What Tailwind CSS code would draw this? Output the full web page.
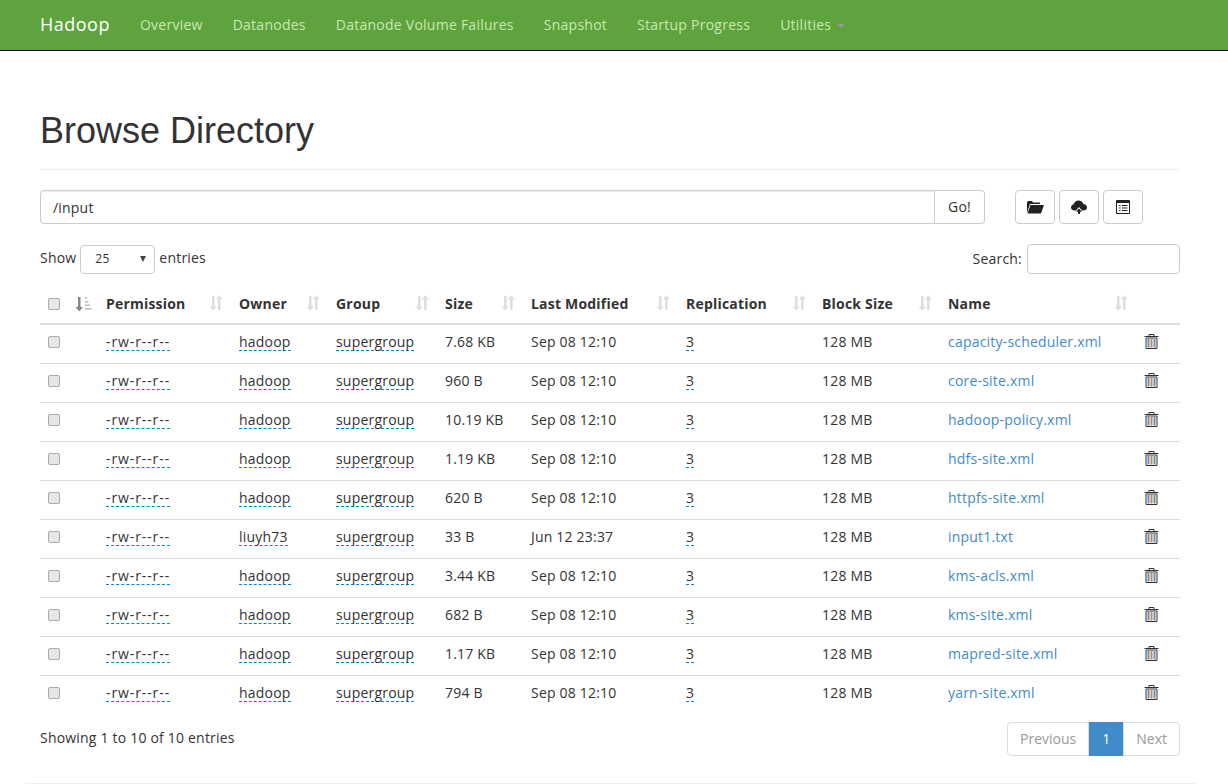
<!DOCTYPE html>
<html lang="en">
<head>
    <meta charset="UTF-8">
    <title>Browsing HDFS</title>
    <script src="https://cdn.jsdelivr.net/npm/@tailwindcss/browser@4"></script>
</head>
<body class="bg-white text-[#333] text-sm tracking-[0.2px] font-['Open_Sans',sans-serif] overflow-hidden h-[784px]">
    <!-- Navbar -->
    <nav class="h-[51px] bg-[#5fa33e] border-b border-black flex items-center pl-10 text-[#c7e9b0]">
        <a class="text-[18px] tracking-[0.5px] text-white mr-[30px]">Hadoop</a>
        <div class="flex items-center gap-[30px] tracking-[0.25px]">
            <a>Overview</a>
            <a>Datanodes</a>
            <a>Datanode Volume Failures</a>
            <a>Snapshot</a>
            <a>Startup Progress</a>
            <a class="flex items-center">Utilities
                <span class="ml-[6px] mt-[2px] border-x-4 border-t-4 border-x-transparent border-t-[#999]"></span>
            </a>
        </div>
    </nav>

    <div class="mx-[25px] w-[1170px] px-[15px]">
        <!-- Title -->
        <div class="mt-[60px] pb-[18px] border-b border-[#eee] h-[59px]">
            <h1 class="text-[36px] leading-[40px] tracking-normal font-['Liberation_Sans',sans-serif]">Browse Directory</h1>
        </div>

        <!-- Path bar -->
        <div class="flex mt-5 w-[1140px]">
            <input value="/input" class="w-[895px] h-[34px] px-3 border border-[#ccc] rounded-l shadow-[inset_0_1px_1px_rgba(0,0,0,0.075)]">
            <button class="w-[50px] h-[34px] border border-l-0 border-[#ccc] rounded-r">Go!</button>
            <div class="flex gap-1 ml-[30px]">
                <button class="w-10 h-[34px] border border-[#ccc] rounded flex items-center justify-center">
                    <svg width="18" height="14" viewBox="0 0 18 14" fill="#222"><path d="M1 13V2.500L2 1h4l1 1.500h7V4H4L1 13z"/><path d="M4.500 5H18l-3 8.500H1.500z"/></svg>
                </button>
                <button class="w-10 h-[34px] border border-[#ccc] rounded flex items-center justify-center">
                    <svg width="16" height="14" viewBox="0 0 16 14" fill="#222"><path d="M3.500 10.500C1.500 10.500 0 9.200 0 7.500 0 6 1 4.800 2.500 4.600 3 2.200 5 .5 7.500.5c2.300 0 4.200 1.500 4.800 3.500C14.400 4 16 5.500 16 7.400c0 1.800-1.500 3.100-3.500 3.100H11L8 7l-3 3.500z"/><path d="M8 8.500l3 3.300H9V14H7v-2.200H5z"/></svg>
                </button>
                <button class="w-10 h-[34px] border border-[#ccc] rounded flex items-center justify-center">
                    <svg width="14" height="14" viewBox="0 0 14 14" fill="none"><path d="M.5.500h13v13H.5z" fill="#fff" stroke="#222"/><path d="M.5 1h13v2H.5z" fill="#222"/><path d="M3 5h1.500v1H3zM3 7.500h1.500v1H3zM3 10h1.500v1H3zM6 5h5.500v1H6zM6 7.500h5.500v1H6zM6 10h5.500v1H6z" fill="#222"/></svg>
                </button>
            </div>
        </div>

        <!-- Length + search -->
        <div class="flex justify-between items-center mt-5 h-[30px]">
            <label class="flex items-center gap-1 -mt-[2px]">Show
                <span class="w-[75px] h-[29px] border border-[#ccc] rounded flex items-center justify-between pl-[14px] pr-2 text-xs mt-[2px]">25
                    <span class="border-x-[3.500px] border-t-[6px] border-x-transparent border-t-[#444]"></span>
                </span>
                entries
            </label>
            <label class="flex items-center gap-[5px]">Search:
                <input class="w-[153px] h-[30px] border border-[#ccc] rounded">
            </label>
        </div>

        <!-- Table -->
        <table class="table-fixed w-[1140px] mt-[11px] border-collapse">
            <colgroup>
                <col class="w-[27px]"><col class="w-[31px]"><col class="w-[133px]"><col class="w-[97px]"><col class="w-[109px]"><col class="w-[86px]"><col class="w-[155px]"><col class="w-[136px]"><col class="w-[126px]"><col class="w-[196px]"><col class="w-[44px]">
            </colgroup>
            <thead>
                <tr class="h-[39px] border-b-2 border-[#ddd] text-left font-bold" id="head"></tr>
            </thead>
            <tbody id="rows"></tbody>
        </table>

        <!-- Footer row -->
        <div class="flex justify-between items-center mt-2 h-[34px]">
            <div class="-mt-[2px]">Showing 1 to 10 of 10 entries</div>
            <div class="flex text-[#999] tracking-normal">
                <a class="h-[34px] px-3 flex items-center border border-[#ddd] rounded-l">Previous</a>
                <a class="h-[34px] w-[34px] flex items-center justify-center bg-[#428bca] text-white">1</a>
                <a class="h-[34px] px-3 flex items-center border border-[#ddd] rounded-r">Next</a>
            </div>
        </div>
    </div>
    <div class="ml-[25px] w-[1170px] mt-[27px] border-t border-[#eee]"></div>

    <script>
        const checkbox = '<span class="block w-[12px] h-[12px] border border-[#aaa] bg-[#e6e6e6] rounded-[2px]"></span>';
        const sortIcon = '<svg class="absolute right-[8px] top-[10px]" width="14" height="16" viewBox="0 0 14 16" fill="#ddd"><path d="M3 1h2.500v10.500H8L4.200 15.500.5 11.500H3zM9 4.500H6.500L10.300.5 14 4.500h-2.500V15H9z"/></svg>';
        const sortAsc = '<svg class="block" width="17" height="16" viewBox="0 0 17 16" fill="#888"><path d="M3 1h2.500v10H8l-3.700 4.500L.5 11H3z"/><path d="M10 1h2v1.500h-2zM10 5h3.500v1.500H10zM10 8.500h5V10h-5zM10 12h6.500v1.500H10z" fill="#bbb"/></svg>';
        const trash = '<svg class="block" width="15" height="15" viewBox="0 0 15 15"><path d="M5 2.500V.5h5v2M.5 2.500h14" fill="none" stroke="#333"/><path d="M2 4h11v10.500H2z" fill="#fff" stroke="#333"/><path d="M3.500 5h2v8.500h-2z" fill="#6a8fb8"/><path d="M6.500 5h2v8.500h-2z" fill="#c58a50"/><path d="M9.500 5h2v8.500h-2z" fill="#6a8fb8"/></svg>';
        const editable = 'border-b border-dashed border-[#0088cc] leading-[17px] inline-block';

        const head = ['Permission', 'Owner', 'Group', 'Size', 'Last Modified', 'Replication', 'Block Size', 'Name'];
        document.getElementById('head').innerHTML =
            `<th class="pl-2">${checkbox}</th><th class="pl-2">${sortAsc}</th>` +
            head.map(h => `<th class="relative pl-2">${h}${sortIcon}</th>`).join('') + '<th></th>';

        const files = [
            ['hadoop', '7.68 KB', 'Sep 08 12:10', 'capacity-scheduler.xml'],
            ['hadoop', '960 B', 'Sep 08 12:10', 'core-site.xml'],
            ['hadoop', '10.19 KB', 'Sep 08 12:10', 'hadoop-policy.xml'],
            ['hadoop', '1.19 KB', 'Sep 08 12:10', 'hdfs-site.xml'],
            ['hadoop', '620 B', 'Sep 08 12:10', 'httpfs-site.xml'],
            ['liuyh73', '33 B', 'Jun 12 23:37', 'input1.txt'],
            ['hadoop', '3.44 KB', 'Sep 08 12:10', 'kms-acls.xml'],
            ['hadoop', '682 B', 'Sep 08 12:10', 'kms-site.xml'],
            ['hadoop', '1.17 KB', 'Sep 08 12:10', 'mapred-site.xml'],
            ['hadoop', '794 B', 'Sep 08 12:10', 'yarn-site.xml'],
        ];
        document.getElementById('rows').innerHTML = files.map(([owner, size, date, name], i) => `
            <tr class="h-[39px] ${i < 9 ? 'border-b border-[#ddd]' : ''}">
                <td class="pl-2 pb-1">${checkbox}</td>
                <td></td>
                <td class="pl-2 pb-1"><span class="${editable} tracking-[0.9px]">-rw-r--r--</span></td>
                <td class="pl-2 pb-1"><span class="${editable}">${owner}</span></td>
                <td class="pl-2 pb-1"><span class="${editable}">supergroup</span></td>
                <td class="pl-2 pb-1">${size}</td>
                <td class="pl-2 pb-1">${date}</td>
                <td class="pl-2 pb-1"><span class="${editable}">3</span></td>
                <td class="pl-2 pb-1">128 MB</td>
                <td class="pl-2 pb-1 text-[#428bca]">${name}</td>
                <td class="pl-2 pb-1">${trash}</td>
            </tr>`).join('');
    </script>
</body>
</html>
